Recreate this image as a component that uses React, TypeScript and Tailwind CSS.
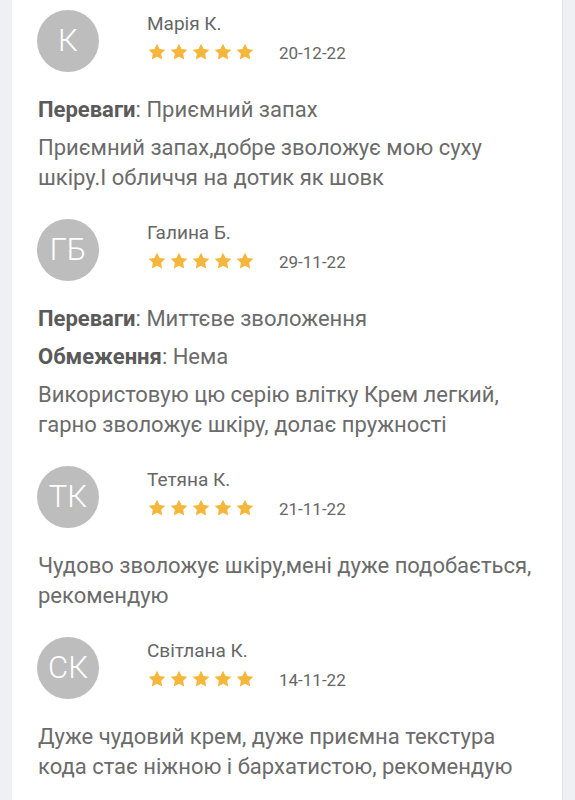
import React from 'react';

type Review = {
  initials: string;
  name: string;
  date: string;
  pros?: string;
  cons?: string;
  text: string;
};

const reviews: Review[] = [
  {
    initials: 'К',
    name: 'Марія К.',
    date: '20-12-22',
    pros: 'Приємний запах',
    text: 'Приємний запах,добре зволожує мою суху шкіру.І обличчя на дотик як шовк',
  },
  {
    initials: 'ГБ',
    name: 'Галина Б.',
    date: '29-11-22',
    pros: 'Миттєве зволоження',
    cons: 'Нема',
    text: 'Використовую цю серію влітку Крем легкий, гарно зволожує шкіру, долає пружності',
  },
  {
    initials: 'ТК',
    name: 'Тетяна К.',
    date: '21-11-22',
    text: 'Чудово зволожує шкіру,мені дуже подобається, рекомендую',
  },
  {
    initials: 'СК',
    name: 'Світлана К.',
    date: '14-11-22',
    text: 'Дуже чудовий крем, дуже приємна текстура кода стає ніжною і бархатистою, рекомендую',
  },
];

function Star() {
  return (
    <svg viewBox="0 0 24 24" className="w-5 h-5 shrink-0">
      <polygon
        points="12,2 15.09,8.26 22,9.27 17,14.14 18.18,21.02 12,17.77 5.82,21.02 7,14.14 2,9.27 8.91,8.26"
        fill="#f5b73b"
      />
    </svg>
  );
}

function ReviewItem({ review }: { review: Review }) {
  return (
    <div className="pb-[26px]">
      {/* Header */}
      <div className="flex">
        <div className="w-[62px] h-[62px] rounded-full bg-[#bdbdbd] flex items-center justify-center text-white text-[31px] font-light shrink-0">
          {review.initials}
        </div>
        <div className="ml-[48px]">
          <div className="mt-[3px] text-[19px] leading-[22px] text-[#666]">{review.name}</div>
          <div className="flex items-center mt-[6px]">
            <div className="flex gap-[2px]">
              <Star />
              <Star />
              <Star />
              <Star />
              <Star />
            </div>
            <span className="ml-[24px] mt-[2px] text-[17px] leading-[20px] text-[#666]">{review.date}</span>
          </div>
        </div>
      </div>

      {/* Body */}
      <div className="mt-[23px] pl-px text-[22px] leading-[30px] text-[#6b6b6b] space-y-2">
        {review.pros && (
          <p>
            <span className="font-bold text-[#5a5a5a]">Переваги</span>: {review.pros}
          </p>
        )}
        {review.cons && (
          <p>
            <span className="font-bold text-[#5a5a5a]">Обмеження</span>: {review.cons}
          </p>
        )}
        <p>{review.text}</p>
      </div>
    </div>
  );
}

export default function App() {
  return (
    <div className="min-h-screen bg-[#eef0f4] flex" style={{ fontFamily: 'Roboto, "Noto Sans", sans-serif' }}>
      <div className="ml-[12px] w-[551px] bg-white border-r border-[#e1e3e8] pl-[25px] pr-[18px] pt-[10px]">
        {reviews.map((r) => (
          <ReviewItem key={r.name} review={r} />
        ))}
      </div>
    </div>
  );
}
